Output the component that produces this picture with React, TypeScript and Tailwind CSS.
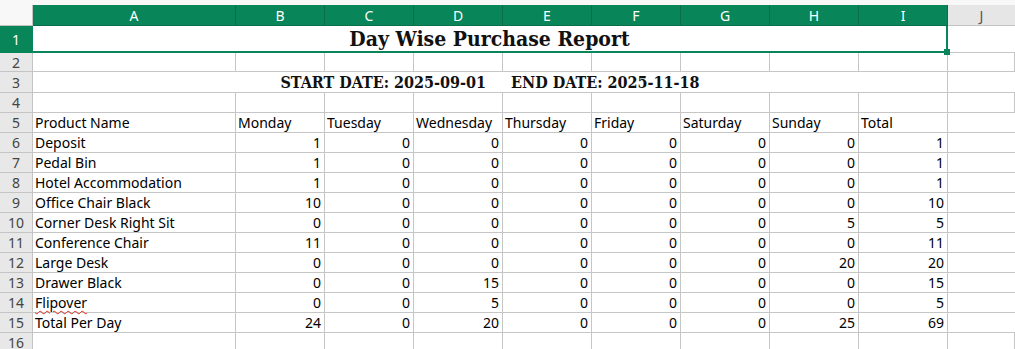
import React from 'react'

const cols = ['A', 'B', 'C', 'D', 'E', 'F', 'G', 'H', 'I']
const days = ['Monday', 'Tuesday', 'Wednesday', 'Thursday', 'Friday', 'Saturday', 'Sunday', 'Total']

const rows: [string, number[]][] = [
  ['Deposit', [1, 0, 0, 0, 0, 0, 0, 1]],
  ['Pedal Bin', [1, 0, 0, 0, 0, 0, 0, 1]],
  ['Hotel Accommodation', [1, 0, 0, 0, 0, 0, 0, 1]],
  ['Office Chair Black', [10, 0, 0, 0, 0, 0, 0, 10]],
  ['Corner Desk Right Sit', [0, 0, 0, 0, 0, 0, 5, 5]],
  ['Conference Chair', [11, 0, 0, 0, 0, 0, 0, 11]],
  ['Large Desk', [0, 0, 0, 0, 0, 0, 20, 20]],
  ['Drawer Black', [0, 0, 15, 0, 0, 0, 0, 15]],
  ['Flipover', [0, 0, 5, 0, 0, 0, 0, 5]],
  ['Total Per Day', [24, 0, 20, 0, 0, 0, 25, 69]],
]

const gridCols = 'grid grid-cols-[33px_203px_repeat(8,89px)_1fr]'
const sans = { fontFamily: '"Noto Sans", "Open Sans", sans-serif' }
const serif = { fontFamily: '"DejaVu Serif", "Liberation Serif", serif' }

const RowHead: React.FC<{ n: number; h: string; active?: boolean }> = ({ n, h, active }) => (
  <div
    className={`${h} flex items-center justify-center border-r border-b text-[14px] ${
      active ? 'bg-[#088559] text-white border-[#088559]' : 'bg-[#e8e8e8] text-[#444] border-[#c4c4c4]'
    }`}
  >
    {n}
  </div>
)

const Blank: React.FC<{ h: string; n: number }> = ({ h, n }) => (
  <>
    <RowHead n={n} h={h} />
    {Array.from({ length: 10 }).map((_, i) => (
      <div key={i} className={`${h} border-r border-b border-[#c6c6c6]`} />
    ))}
  </>
)

export default function App() {
  return (
    <div className="h-[349px] w-[1015px] overflow-hidden bg-white" style={sans}>
      <div className="h-[5px] bg-[#f8f8f8]" />
      <div className={gridCols}>
        {/* column headers */}
        <div className="h-[21px] border-r border-b border-[#c4c4c4] bg-[#f8f8f8]" />
        {cols.map((c) => (
          <div
            key={c}
            className="flex h-[21px] items-center justify-center border-r border-b border-[#0a6e4a] bg-[#088559] text-[14px] text-white"
          >
            {c}
          </div>
        ))}
        <div className="flex h-[21px] items-center justify-center border-b border-[#c4c4c4] bg-[#e6e6e6] text-[14px] text-[#555]">
          J
        </div>

        {/* row 1: title */}
        <RowHead n={1} h="h-[27px]" active />
        <div className="relative col-span-9 flex h-[27px] items-center justify-center border-r-2 border-b-2 border-[#088559]">
          <span className="text-[21px] font-bold leading-none text-[#111]" style={{ ...serif, fontStretch: 'condensed' }}>
            Day Wise Purchase Report
          </span>
          <div className="absolute -right-[4px] -bottom-[4px] h-[6px] w-[6px] bg-[#088559]" />
        </div>
        <div className="h-[27px] border-b border-[#c6c6c6]" />

        <Blank n={2} h="h-[19px]" />

        {/* row 3: dates */}
        <RowHead n={3} h="h-[21px]" />
        <div className="col-span-9 flex h-[21px] items-end justify-center border-r border-b border-[#c6c6c6] pb-[1px]">
          <span className="text-[16px] font-bold leading-none text-[#111]" style={{ ...serif, fontStretch: 'condensed' }}>
            START DATE: 2025-09-01&nbsp;&nbsp;&nbsp;&nbsp;&nbsp;END DATE: 2025-11-18
          </span>
        </div>
        <div className="h-[21px] border-b border-[#c6c6c6]" />

        <Blank n={4} h="h-[20px]" />

        {/* row 5: headings */}
        <RowHead n={5} h="h-[20px]" />
        <div className="flex h-[20px] items-end border-r border-b border-[#c6c6c6] pl-[2px] text-[14px] leading-[19px] text-black">
          Product Name
        </div>
        {days.map((d) => (
          <div
            key={d}
            className="flex h-[20px] items-end border-r border-b border-[#c6c6c6] pl-[2px] text-[14px] leading-[19px] text-black"
          >
            {d}
          </div>
        ))}
        <div className="h-[20px] border-b border-[#c6c6c6]" />

        {rows.map(([name, vals], r) => (
          <React.Fragment key={name}>
            <RowHead n={r + 6} h="h-[20px]" />
            <div className="flex h-[20px] items-end border-r border-b border-[#c6c6c6] pl-[2px] text-[14px] leading-[19px] text-black">
              <span className={name === 'Flipover' ? 'underline decoration-wavy decoration-[#e0261b] decoration-1 underline-offset-2' : ''}>
                {name}
              </span>
            </div>
            {vals.map((v, i) => (
              <div
                key={i}
                className="flex h-[20px] items-end justify-end border-r border-b border-[#c6c6c6] pr-[3px] text-[14px] leading-[19px] text-black"
              >
                {v}
              </div>
            ))}
            <div className="h-[20px] border-b border-[#c6c6c6]" />
          </React.Fragment>
        ))}

        <Blank n={16} h="h-[20px]" />
      </div>
    </div>
  )
}
